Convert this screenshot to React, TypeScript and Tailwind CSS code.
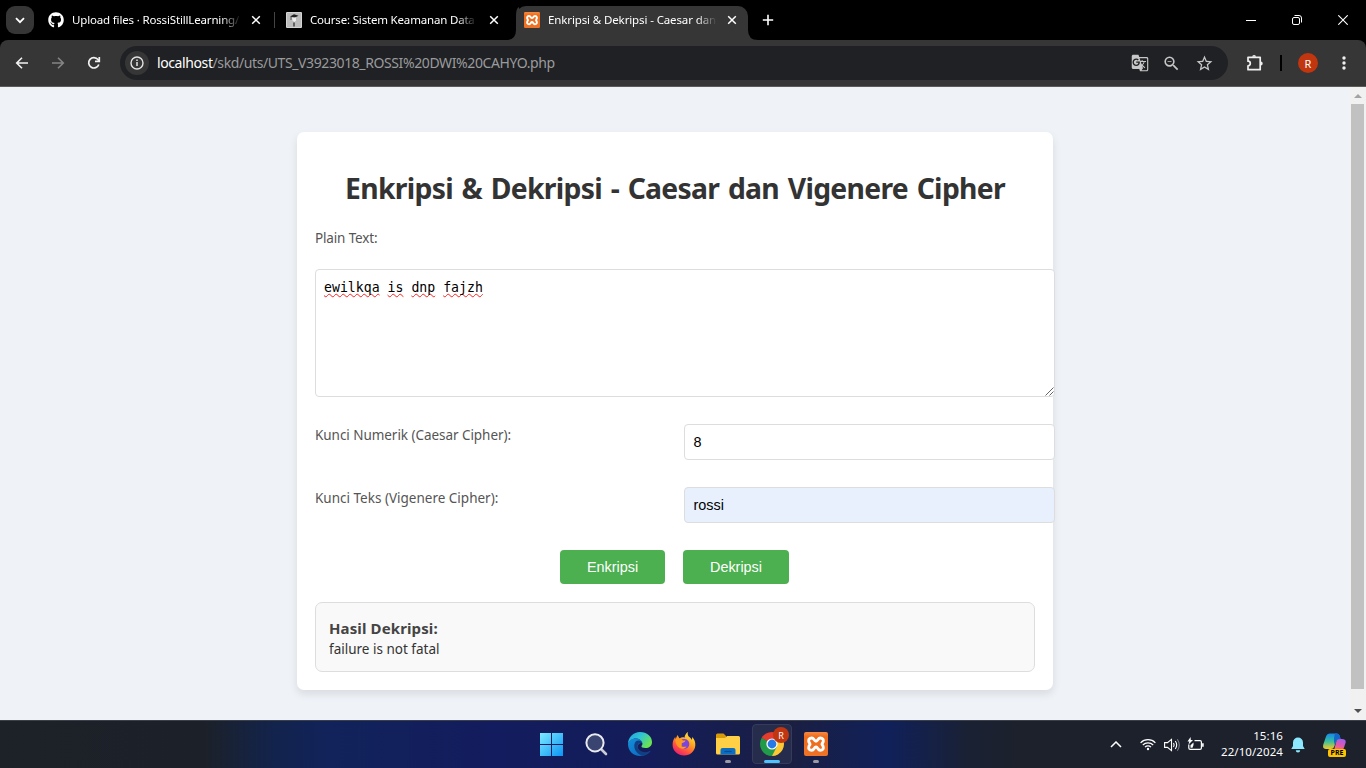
import React from "react";
import { FaGithub } from "react-icons/fa";
import { MdGTranslate, MdOutlineZoomOut, MdStarBorder } from "react-icons/md";

function Close() {
  return (
    <svg width="10" height="10" viewBox="0 0 10 10" className="shrink-0" stroke="#fff" strokeWidth="1.5">
      <path d="M1.2 1.2l7.6 7.6M8.8 1.2L1.2 8.8" />
    </svg>
  );
}

function Xampp({ size }: { size: number }) {
  return (
    <svg width={size} height={size} viewBox="0 0 24 24" className="block shrink-0">
      <defs>
        <linearGradient id="xam" x1="0" y1="0" x2="0" y2="1"><stop stopColor="#f58a45" /><stop offset=".2" stopColor="#ef6c1a" /><stop offset="1" stopColor="#ee7328" /></linearGradient>
      </defs>
      <rect width="24" height="24" rx="2" fill="url(#xam)" />
      <path
        d="M7.700 6C5 6 4.500 7.800 4.700 9.300c.1 1.200 1.300 2 1.300 2.900s-1.200 1.500-1.300 2.700c-.2 1.800.3 3.400 3 3.400 2.600 0 2.300-3.300 4.300-3.300s1.700 3.300 4.300 3.300c2.700 0 3.200-1.600 3-3.400-.1-1.200-1.300-1.800-1.300-2.700s1.200-1.700 1.300-2.900c.2-1.500-.3-3.300-3-3.300-2.600 0-2.300 3.200-4.300 3.200S10.300 6 7.700 6z"
        fill="none"
        stroke="#fff"
        strokeWidth="2.900"
      />
    </svg>
  );
}

function TabTitle({ children, className }: { children: React.ReactNode; className: string }) {
  return (
    <span
      className={
        "shrink-0 overflow-hidden whitespace-nowrap text-[11.5px] leading-4 text-white [mask-image:linear-gradient(to_right,black_88%,transparent)] " +
        className
      }
    >
      {children}
    </span>
  );
}

function TabStrip() {
  return (
    <div className="flex h-10 bg-black">
      <div className="ml-[6px] mt-[6px] grid h-7 w-7 place-items-center rounded-[9px] bg-[#363636]">
        <svg width="10" height="7" viewBox="0 0 10 7" fill="none" stroke="#fff" strokeWidth="1.8">
          <path d="M1 1.2l4 4 4-4" />
        </svg>
      </div>
      <div className="flex h-10 w-[227px] items-center pl-[14px]">
        <FaGithub size={16} color="#fff" className="shrink-0" />
        <TabTitle className="ml-2 w-[169px] tracking-[-0.16px]">Upload files · RossiStillLearning/</TabTitle>
        <span className="ml-[10px]"><Close /></span>
      </div>
      <div className="ml-[13px] mt-3 h-4 w-px bg-[#444]" />
      <div className="flex h-10 w-[225px] items-center pl-[11px]">
        <svg width="16" height="16" viewBox="0 0 16 16" className="shrink-0">
          <rect width="16" height="16" rx="1" fill="#d5d5d5" />
          <rect x="1" y="1" width="14" height="14" fill="#bcbcbc" />
          <path d="M4 4.5l4-2.3 4.5 1.5-4 2z" fill="#222" />
          <path d="M6 5.5h4v3L8.500 10 6.500 8.500z" fill="#eee" />
          <path d="M8 10.5v4" stroke="#444" strokeWidth="1.5" />
          <path d="M5 5v3" stroke="#555" />
        </svg>
        <TabTitle className="ml-2 w-[167px] tracking-[-0.18px]">Course: Sistem Keamanan Data</TabTitle>
        <span className="ml-[12px]"><Close /></span>
      </div>
      <svg width="13" height="40" viewBox="0 0 13 40" className="ml-[6px] shrink-0">
        <path d="M0 40q10 0 10-10V16q0-8 3-9v33z" fill="#363636" />
      </svg>
      <div className="-ml-[3px] mt-[6px] flex h-[34px] w-[232px] items-center rounded-t-[10px] bg-[#363636] pb-[6px] pl-2">
        <Xampp size={16} />
        <TabTitle className="ml-2 w-[169px] tracking-[-0.12px]">Enkripsi &amp; Dekripsi - Caesar dan</TabTitle>
        <span className="ml-[10px]"><Close /></span>
      </div>
      <svg width="10" height="40" viewBox="0 0 10 40" className="shrink-0">
        <path d="M0 30q0 10 10 10H0z" fill="#363636" />
      </svg>
      <svg width="12" height="12" viewBox="0 0 12 12" className="ml-[4px] mt-[14px]" stroke="#fff" strokeWidth="1.6">
        <path d="M6 .8v10.4M.8 6h10.4" />
      </svg>
      <div className="ml-auto mr-[18px] mt-[15px] flex">
        <svg width="10" height="10" viewBox="0 0 10 10" stroke="#fff"><path d="M0 5.5h10" /></svg>
        <svg width="10" height="10" viewBox="0 0 10 10" fill="none" stroke="#fff" className="ml-9">
          <rect x=".5" y="2.5" width="7" height="7" rx="1.5" />
          <path d="M2.5.5H7A2.5 2.5 0 019.5 3v4.5" />
        </svg>
        <svg width="10" height="10" viewBox="0 0 10 10" stroke="#fff" strokeWidth="1.1" className="ml-9">
          <path d="M.3.3l9.4 9.4M9.7.3L.3 9.7" />
        </svg>
      </div>
    </div>
  );
}

function Toolbar() {
  return (
    <div className="h-[47px] bg-black">
      <div className="flex h-[47px] items-center rounded-t-[8px] border-b border-[#5b5b58] bg-[#363636]">
        <svg width="14" height="14" viewBox="0 0 14 14" fill="none" stroke="#f2f2f2" strokeWidth="1.6" className="ml-[15px]">
          <path d="M13 7H2M7 1.7L1.7 7 7 12.3" />
        </svg>
        <svg width="14" height="14" viewBox="0 0 14 14" fill="none" stroke="#858585" strokeWidth="1.6" className="ml-[22px]">
          <path d="M1 7h11M7 1.7L12.3 7 7 12.3" />
        </svg>
        <svg width="14" height="14" viewBox="0 0 14 14" fill="none" stroke="#f2f2f2" strokeWidth="1.7" className="ml-[22px]">
          <path d="M11.8 8.5A5.2 5.2 0 1 1 11 3.6L12 4.8" />
          <path d="M12.3 1v4.3H8" />
        </svg>
        <div className="ml-[19px] flex h-[34px] w-[1108px] items-center rounded-full bg-[#202124]">
          <div className="ml-[5px] grid h-6 w-6 place-items-center rounded-full bg-[#363636]">
            <svg width="14" height="14" viewBox="0 0 14 14" fill="none" stroke="#e3e3e3" strokeWidth="1.4">
              <circle cx="7" cy="7" r="6" />
              <path d="M7 6v4M7 3.6v1.4" strokeWidth="1.5" />
            </svg>
          </div>
          <span className="ml-2 whitespace-nowrap text-[14px] leading-5 tracking-[-0.4px] text-[#9a9b9d]">
            <span className="text-white">localhost</span>/skd/uts/UTS_V3923018_ROSSI%20DWI%20CAHYO.php
          </span>
          <div className="ml-auto flex items-center text-[#c7c7c7]">
            <MdGTranslate size={18} />
            <MdOutlineZoomOut size={19} className="ml-[13px]" />
            <MdStarBorder size={19} className="ml-[14px] mr-[14px]" />
          </div>
        </div>
        <svg width="18" height="18" viewBox="0 0 18 18" fill="none" stroke="#f0f0f0" strokeWidth="1.700" strokeLinejoin="round" className="ml-[18px]">
          <path d="M2 3.300h12.200v12.400H2v-3.900a2.300 2.300 0 0 0 0-4.600z" />
          <path d="M6.200 2.800a1.900 1.900 0 0 1 3.800 0zM14.800 7.600a1.900 1.900 0 0 1 0 3.800z" fill="#f0f0f0" stroke="none" />
        </svg>
        <div className="ml-4 h-4 w-[2px] bg-black" />
        <div className="ml-[16px] grid h-5 w-5 place-items-center rounded-full bg-[#c1360e] text-[11px] leading-none text-white">R</div>
        <svg width="4" height="14" viewBox="0 0 4 14" fill="#f0f0f0" className="ml-[24px]">
          <circle cx="2" cy="2" r="1.7" /><circle cx="2" cy="7" r="1.7" /><circle cx="2" cy="12" r="1.7" />
        </svg>
      </div>
    </div>
  );
}

const misspelt = "underline decoration-[#ff2020] decoration-wavy decoration-[1px] underline-offset-[1px] [text-decoration-skip-ink:none]";

function Cipher() {
  return (
    <div className="mt-[45px] h-[558px] w-[756px] rounded-[7px] bg-white px-[18px] pt-[35px] shadow-[0_4px_9px_rgba(0,0,0,0.1)]">
      <h1 className="whitespace-nowrap text-center text-[28.3px] font-bold leading-[43px] tracking-[-0.7px] text-[#333] [word-spacing:2px]">
        Enkripsi &amp; Dekripsi - Caesar dan Vigenere Cipher
      </h1>
      <div className="mt-[18px] h-5 text-[13.5px] leading-5 tracking-[-0.15px] text-[#555]">Plain Text:</div>
      <div className="relative mt-[21px] h-[128px] w-[740px] rounded-[4px] border border-[#ddd] bg-white px-[8px] pt-[9px] font-['DejaVu_Sans_Mono',monospace] text-[13.2px] leading-[18px] text-black">
        <span className={misspelt}>ewilkqa</span> <span className={misspelt}>is</span>{" "}
        <span className={misspelt}>dnp</span> <span className={misspelt}>fajzh</span>
        <svg width="9" height="9" viewBox="0 0 9 9" stroke="#555" strokeWidth=".9" className="absolute bottom-0 right-0">
          <path d="M.5 8.5l8-8M4.500 8.500l4-4" />
        </svg>
      </div>
      <div className="mt-[27px] flex h-9 text-[13.5px] leading-[22px] text-[#555]">
        <label className="w-[369px] shrink-0 tracking-[-0.05px]">Kunci Numerik (Caesar Cipher):</label>
        <div className="w-[371px] shrink-0 rounded-[4px] border border-[#ddd] bg-white px-[8.500px] font-['Liberation_Sans',sans-serif] text-[14.4px] leading-[34px] text-black">8</div>
      </div>
      <div className="mt-[27px] flex h-9 text-[13.5px] leading-[22px] text-[#555]">
        <label className="w-[369px] shrink-0">Kunci Teks (Vigenere Cipher):</label>
        <div className="w-[371px] shrink-0 rounded-[4px] border border-[#ddd] bg-[#e8f0fe] px-[8.500px] font-['Liberation_Sans',sans-serif] text-[14.4px] leading-[34px] text-black">rossi</div>
      </div>
      <div className="ml-[245px] mt-[27px] flex gap-[18px] font-['Liberation_Sans',sans-serif] text-[14.4px] text-white">
        <button className="h-[34px] w-[105px] rounded-[4px] bg-[#4caf50] pt-px">Enkripsi</button>
        <button className="h-[34px] w-[106px] rounded-[4px] bg-[#4caf50] pt-px">Dekripsi</button>
      </div>
      <div className="mt-[18px] h-[70px] rounded-[7px] border border-[#ddd] bg-[#f9f9f9] px-[13px] pt-[15px] text-[#333]">
        <h3 className="text-[15px] font-bold leading-[21px] tracking-[0.12px] text-[#444]">Hasil Dekripsi:</h3>
        <p className="text-[13.5px] leading-[21px]">failure is not fatal</p>
      </div>
    </div>
  );
}

function Edge() {
  return (
    <svg width="24" height="24" viewBox="0 0 24 24">
      <defs>
        <linearGradient id="edgeTop" x1="0" y1="0" x2="1" y2=".6"><stop stopColor="#219ee0" /><stop offset=".5" stopColor="#30c4d4" /><stop offset="1" stopColor="#6be34e" /></linearGradient>
        <linearGradient id="edgeLow" x1="0" y1="0" x2="1" y2="1"><stop stopColor="#1590dc" /><stop offset="1" stopColor="#0a62b8" /></linearGradient>
      </defs>
      <path d="M0 12C0 5 5.5 0 12 0c7 0 12 4.500 12 10 0 4-3 6-6.500 6-3 0-4.500-1-4-2 1-1.200 1-2 .8-3C13.500 8 11 6.500 8 6.500 4 6.500 1 9 0 12z" fill="url(#edgeTop)" />
      <path d="M0 12.200C.6 8.500 4 6.300 8 6.500c4 .2 6 2.500 6.300 4.800-1.500-1-4.300 0-4.600 3.200-.3 3.800 3.700 7 8.300 6.300 1.800-.3 3.500-1.200 4.500-2C20.500 22 16.500 24 12 24 5 24 0 18.500 0 12.200z" fill="url(#edgeLow)" />
      <path d="M8 9.300c-2 2-2.300 5.700-.8 8.700 1.800 3.500 5 5.500 8 5.600 3.500-.6 6-2.600 7.300-4.800-5 3-12 1-12.800-4-.3-2.500 1.500-4.500 4.600-3.500C13.500 8.600 10.300 7.500 8 9.300z" fill="#123f83" />
    </svg>
  );
}

function Firefox() {
  return (
    <svg width="24" height="24" viewBox="0 0 24 24">
      <defs>
        <linearGradient id="fox" x1=".8" y1="0" x2=".2" y2="1"><stop stopColor="#fff34a" /><stop offset=".38" stopColor="#ffa41f" /><stop offset=".7" stopColor="#ff5140" /><stop offset="1" stopColor="#e8157b" /></linearGradient>
      </defs>
      <path d="M16 0c-1 2.500.2 4.100 2 5.600.9.7 1.500 1.600 1.900 2.500l.4-3.100c2.200 2.500 3.300 5.400 3 8.500-.5 6-5.200 10-11.200 10S.6 19 .6 13c0-3.500.8-5.900 2.600-8l.4 2L5.500 3l2 3.500C9.200 5.300 11 5 12.500 5.700 12.700 3.300 14 1.300 16 0z" fill="url(#fox)" />
      <circle cx="12.300" cy="12" r="5" fill="#7c45dc" />
      <path d="M3.500 7c2.500-1 5.500-.6 7.500 1.500h2.500c-.2 1.700-2.500 2-3.600 2.600-.4 1.500.3 2.300-.4 3.200 2.200 1 3 .3 5 .1-1.300 2.400-5 3.200-7.600 1.200C4.300 13.500 3 10.500 3.500 7z" fill="#ff9a20" />
    </svg>
  );
}

function Chrome() {
  return (
    <svg width="24" height="24" viewBox="0 0 24 24">
      <path d="M12 12L1.610 6A12 12 0 0 1 22.390 6z" fill="#e33b2e" />
      <path d="M12 12L22.390 6A12 12 0 0 1 12 24z" fill="#fcc934" />
      <path d="M12 12v12A12 12 0 0 1 1.610 6z" fill="#219a49" />
      <path d="M12 6.500h10.650L22.390 6H12z" fill="#e33b2e" />
      <path d="M7.200 14.700L1.610 6 12 12zM12 24l4.800-9.300L12 12z" fill="#219a49" />
      <circle cx="12" cy="12" r="5.600" fill="#fff" />
      <circle cx="12" cy="12" r="4.400" fill="#2879e8" />
    </svg>
  );
}

function Taskbar() {
  return (
    <div className="relative flex h-12 border-t border-[#3b3f49] bg-[linear-gradient(to_right,#1d2229_0%,#1c2129_15%,#12234c_20%,#11235a_24%,#131c5e_36%,#141d59_48%,#1a1f42_58%,#10205a_65%,#1a2133_71%,#1c212b_75%,#1c212b_100%)]">
      <div className="ml-[540px] mt-3 flex">
        <svg width="23" height="23" viewBox="0 0 23 23">
          <defs><linearGradient id="win" x1="0" y1="0" x2="23" y2="23" gradientUnits="userSpaceOnUse"><stop stopColor="#7deaff" /><stop offset="1" stopColor="#0b94f5" /></linearGradient></defs>
          <path d="M0 0h11v11H0zM12 0h11v11H12zM0 12h11v11H0zM12 12h11v11H12z" fill="url(#win)" />
        </svg>
        <svg width="23" height="23" viewBox="0 0 23 23" fill="none" className="ml-[22px]">
          <path d="M16 16l5 5" stroke="#c9ccd3" strokeWidth="2.600" strokeLinecap="round" />
          <circle cx="10" cy="9.800" r="8.600" fill="#3a4470" stroke="#e8eaee" strokeWidth="2" />
        </svg>
        <span className="-mt-px ml-5"><Edge /></span>
        <span className="-mt-px ml-5"><Firefox /></span>
        <svg width="24" height="23" viewBox="0 0 24 23" className="ml-5">
          <path d="M0 2q0-1.500 1.500-1.500h6L10 3v4H0z" fill="#d99a08" />
          <path d="M0 5h9l2-2h11.500Q24 3 24 4.500V20q0 1.500-1.500 1.500h-21Q0 21.500 0 20z" fill="#ffd045" />
          <path d="M4.500 21.500V17q0-2 2-2h11q2 0 2 2v4.500z" fill="#0b6ec2" />
          <path d="M8.500 18.500h7" stroke="#084c8f" strokeWidth="1.200" />
        </svg>
      </div>
      <div className="relative ml-3 mt-[3px] h-10 w-10 rounded-[4px] border border-[#353c5b] bg-[#262c4c] pl-[7px] pt-[7px]">
        <Chrome />
        <span className="absolute left-[20px] top-[2px] grid h-4 w-4 place-items-center rounded-full bg-[#c1360e] text-[9px] leading-none text-white">R</span>
        <span className="absolute bottom-0 left-[11px] h-[3px] w-4 rounded-full bg-[#4cc2ff]" />
      </div>
      <span className="ml-3 mt-[11px] h-6"><Xampp size={24} /></span>
      <span className="absolute left-[725px] top-[39px] h-[3px] w-[6px] rounded-full bg-[#9a9ba5]" />
      <span className="absolute left-[813px] top-[39px] h-[3px] w-[6px] rounded-full bg-[#9a9ba5]" />
      <div className="ml-auto flex items-center text-white">
        <svg width="12" height="7" viewBox="0 0 12 7" fill="none" stroke="#fff" strokeWidth="1.500"><path d="M1 6l5-5 5 5" /></svg>
        <svg width="16" height="13" viewBox="0 0 16 13" fill="none" stroke="#fff" strokeWidth="1.200" className="ml-[18px]">
          <path d="M.6 4.800a10.300 10.300 0 0 1 14.800 0M2.800 7a7.300 7.300 0 0 1 10.400 0M5 9.200a4.200 4.200 0 0 1 6 0" />
          <circle cx="8" cy="11" r="1.200" fill="#fff" stroke="none" />
        </svg>
        <svg width="17" height="14" viewBox="0 0 17 14" fill="none" stroke="#fff" strokeWidth="1.100" className="ml-2">
          <path d="M.6 4.600h2.900l4-3.300v11.400l-4-3.300H.6zM9.500 5q1.300 2 0 4M11.300 3q2.800 4 0 8" />
          <path d="M13.300 1.300q4 5.700 0 11.400" stroke="#777c85" />
        </svg>
        <svg width="17" height="15" viewBox="0 0 17 15" fill="none" stroke="#fff" strokeWidth="1.200" className="ml-[6px]">
          <path d="M7.500 3.600H13q1.400 0 1.400 1.400v6q0 1.400-1.400 1.400H3.200q-1.400 0-1.400-1.400V7.500" />
          <path d="M15.900 6.300v3.400" strokeWidth="1.600" />
          <path d="M3.600 0L.5 4.500h1.800L1.500 7.500 6 3H3.800z" fill="#fff" stroke="none" />
          <path d="M3.500 10.800V8.300L6.500 5.500v2.500l-1 2.800z" fill="#fff" stroke="none" />
        </svg>
        <div className="ml-[11px] w-[68px] whitespace-nowrap text-right text-[11.5px] leading-4 tracking-[0.08px]">
          <div className="-mt-px">15:16</div>
          <div>22/10/2024</div>
        </div>
        <svg width="14" height="16" viewBox="0 0 14 16" fill="#8ce8ff" className="ml-2">
          <path d="M7 .5a5 5 0 0 1 5 5V9l1.700 3H.3L2 9V5.500a5 5 0 0 1 5-5zM4.800 13.300h4.400a2.200 2.200 0 0 1-4.400 0z" />
        </svg>
        <div className="relative ml-[18px] mr-5 h-[24px] w-[23px]">
          <svg width="23" height="22" viewBox="0 0 23 22">
            <defs>
              <linearGradient id="copL" x1="0" y1="0" x2="0" y2="1"><stop stopColor="#1787ec" /><stop offset=".5" stopColor="#35bfa0" /><stop offset="1" stopColor="#f4ca28" /></linearGradient>
              <linearGradient id="copR" x1=".7" y1="0" x2=".3" y2="1"><stop stopColor="#a65cf0" /><stop offset=".5" stopColor="#e358a9" /><stop offset="1" stopColor="#ff8552" /></linearGradient>
            </defs>
            <path d="M14 6h5q4.500 0 3.500 4l-2 6q-1 3-4 3h-6z" fill="url(#copR)" />
            <path d="M7 .5h7q2 0 2.800 2.500l.7 3q-3.500-.5-4.700 3l-1.500 4.500Q10.500 16 8 16H3Q-.8 16 .3 11.500L3 3.500Q4 .5 7 .5z" fill="url(#copL)" />
            <path d="M12 .5h2q2 0 2.800 2.500l.7 3q-3.500-.5-4.700 3l-1 3Q10 6 12 .5z" fill="#1268c9" />
          </svg>
          <span className="absolute bottom-0 left-[5px] grid h-[8px] w-[18px] place-items-center rounded-[2px] bg-[#ffc400] text-[7px] font-bold leading-none text-black">PRE</span>
        </div>
      </div>
    </div>
  );
}

export default function App() {
  return (
    <div className="flex h-[768px] w-[1366px] flex-col overflow-hidden font-['Noto_Sans','Open_Sans',sans-serif]">
      <TabStrip />
      <Toolbar />
      <div className="flex h-[633px] bg-[#eff3f8]">
        <div className="flex w-[1350px] justify-center">
          <Cipher />
        </div>
        <div className="flex w-4 flex-col items-center bg-[#f1f1f1] pr-px">
          <svg width="8" height="17" viewBox="0 0 8 17" fill="#a3a3a3"><path d="M0 11l4-4 4 4z" /></svg>
          <div className="h-[585px] w-[13px] bg-[#c1c1c1]" />
          <svg width="8" height="31" viewBox="0 0 8 31" fill="#505050"><path d="M0 20h8l-4 4z" /></svg>
        </div>
      </div>
      <Taskbar />
    </div>
  );
}
